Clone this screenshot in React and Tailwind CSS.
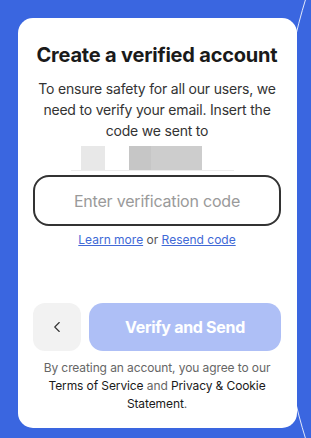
import React from "react";
import { ChevronLeft } from "lucide-react";

export default function App() {
  return (
    <div
      className="relative w-[311px] h-[438px] overflow-hidden bg-[#3a66e0] pt-[18px] pl-[18px]"
      style={{ fontFamily: "Inter, 'Noto Sans', sans-serif" }}
    >
      <svg className="absolute inset-0" width="311" height="438" viewBox="0 0 311 438">
        <path d="M306,-2 C265,130 265,310 306,440" fill="none" stroke="#ffffff" strokeOpacity="0.85" strokeWidth="1" />
      </svg>
      <div className="relative w-[279px] h-[410px] bg-white rounded-[15px] pt-[23px] pl-[15px] pr-[16px] flex flex-col items-center">
        <h1 className="text-[20px] leading-[28px] font-bold text-[#1a1a1a] tracking-[-0.2px]">
          Create a verified account
        </h1>
        <p className="mt-[9px] text-[14px] leading-[21px] text-[#333333] text-center tracking-[-0.2px]">
          To ensure safety for all our users, we need to verify your email. Insert the code we sent to
        </p>
        <div className="mt-[5px] w-[163px] h-[25px] flex flex-col self-start ml-[38px]">
          <div className="flex h-[24px] pl-[10px]">
            <div className="w-[24px] bg-[#e8e8e8]" />
            <div className="w-[24px] bg-white" />
            <div className="w-[22px] bg-[#c6c6c6]" />
            <div className="w-[51px] bg-[#cdcdcd]" />
          </div>
          <div className="h-px bg-[#ececec]" />
        </div>
        <div className="mt-[4px] w-full h-[51px] border-2 border-[#333333] rounded-[16px] flex items-center justify-center">
          <span className="text-[16px] text-[#9a9a9a] tracking-[-0.2px]">Enter verification code</span>
        </div>
        <div className="mt-[5px] text-[12px] leading-[18px] text-[#555555]">
          <span className="text-[#4169d6] underline">Learn more</span> or{" "}
          <span className="text-[#4169d6] underline">Resend code</span>
        </div>
        <div className="mt-[54px] w-full flex gap-[8px]">
          <div className="w-[48px] h-[48px] rounded-[12px] bg-[#f2f2f2] flex items-center justify-center text-[#333333]">
            <ChevronLeft size={18} strokeWidth={1.5} />
          </div>
          <div className="flex-1 h-[48px] rounded-[14px] bg-[#aebff6] flex items-center justify-center">
            <span className="text-white text-[16px] font-bold tracking-[-0.3px]">Verify and Send</span>
          </div>
        </div>
        <div className="mt-[8px] flex flex-col items-center text-[12px] leading-[18px] text-[#666666] tracking-[-0.1px]">
          <div>By creating an account, you agree to our</div>
          <div>
            <span className="text-[#1a1a1a]">Terms of Service</span> and{" "}
            <span className="text-[#1a1a1a]">Privacy &amp; Cookie</span>
          </div>
          <div>
            <span className="text-[#1a1a1a]">Statement</span>.
          </div>
        </div>
      </div>
    </div>
  );
}
